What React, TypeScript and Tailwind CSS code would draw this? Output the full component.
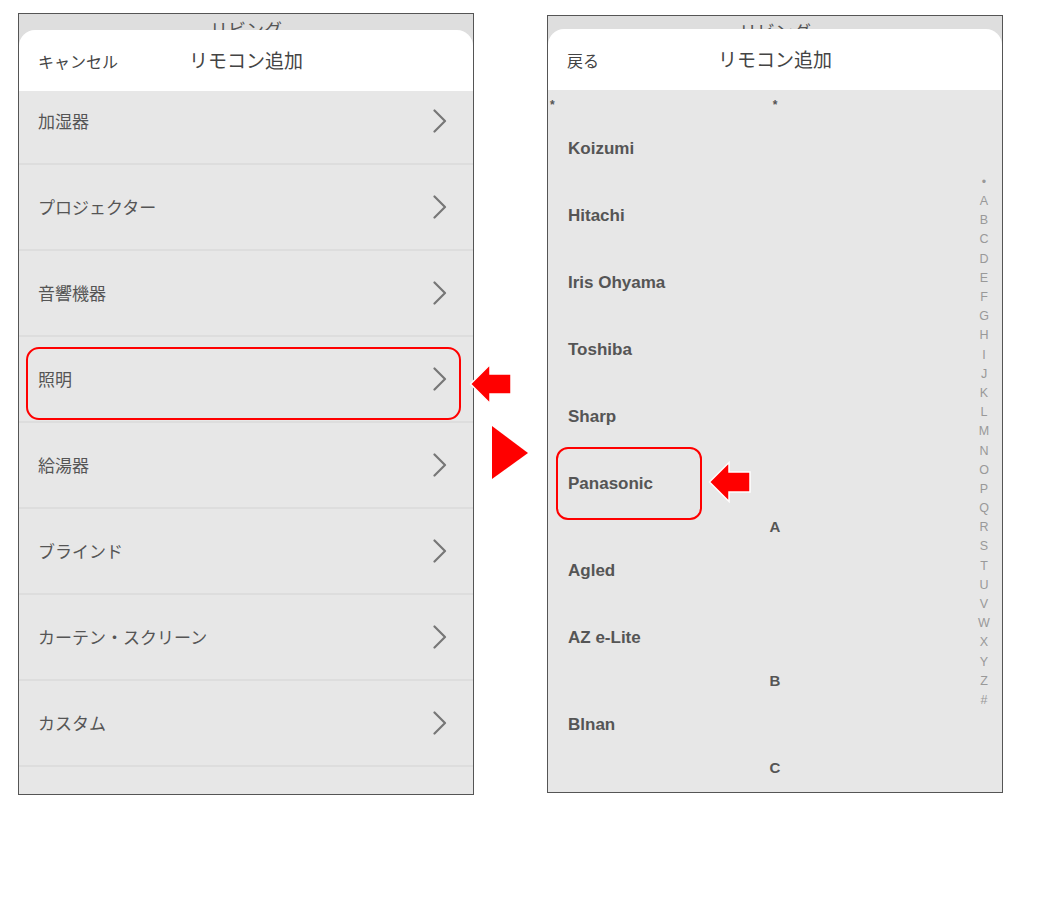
import React from 'react';

const categories = [
  '加湿器',
  'プロジェクター',
  '音響機器',
  '照明',
  '給湯器',
  'ブラインド',
  'カーテン・スクリーン',
  'カスタム',
];

type Entry = { kind: 'brand' | 'section'; label: string };

const brands: Entry[] = [
  { kind: 'brand', label: 'Koizumi' },
  { kind: 'brand', label: 'Hitachi' },
  { kind: 'brand', label: 'Iris Ohyama' },
  { kind: 'brand', label: 'Toshiba' },
  { kind: 'brand', label: 'Sharp' },
  { kind: 'brand', label: 'Panasonic' },
  { kind: 'section', label: 'A' },
  { kind: 'brand', label: 'Agled' },
  { kind: 'brand', label: 'AZ e-Lite' },
  { kind: 'section', label: 'B' },
  { kind: 'brand', label: 'Blnan' },
  { kind: 'section', label: 'C' },
];

const indexLetters = ['•', ...'ABCDEFGHIJKLMNOPQRSTUVWXYZ'.split(''), '#'];

function Chevron() {
  return (
    <svg width="14" height="24" viewBox="0 0 14 24" fill="none">
      <path d="M1.5 1.5 L12 12 L1.5 22.5" stroke="#777" strokeWidth="2.2" strokeLinecap="round" strokeLinejoin="round" />
    </svg>
  );
}

function RedArrow({ className }: { className?: string }) {
  return (
    <svg className={className} width="44" height="42" viewBox="0 0 44 42">
      <polygon
        points="1.5,21 21,1.5 21,11 42,11 42,31 21,31 21,40.5"
        fill="#ff0000"
        stroke="#ffffff"
        strokeWidth="1.5"
      />
    </svg>
  );
}

function SheetHeader({ left }: { left: string }) {
  return (
    <div className="grid h-[61px] grid-cols-[1fr_auto_1fr] items-center rounded-t-[16px] bg-white">
      <span className="pl-[19px] text-[16px] text-[#444]">{left}</span>
      <span className="text-[19px] text-[#444]">リモコン追加</span>
      <span />
    </div>
  );
}

function TopStrip({ h }: { h: string }) {
  return (
    <div className={`${h} overflow-hidden text-center`}>
      <div className="pt-[6px] text-[18px] leading-none text-[#555]">リビング</div>
    </div>
  );
}

export default function App() {
  return (
    <div className="min-h-[906px] w-[1058px] bg-white font-['Noto_Sans_CJK_JP',sans-serif]">
      <div className="flex items-start pl-[18px] pt-[13px]">
        {/* Category list */}
        <div className="h-[782px] w-[456px] overflow-hidden border border-[#555] bg-[#dedede]">
          <TopStrip h="h-[16px]" />
          <SheetHeader left="キャンセル" />
          <div className="bg-[#e7e7e7]">
            {categories.map((c, i) => (
              <div
                key={c}
                className={`relative flex items-center justify-between border-b-2 border-[#dddddd] pl-[19px] pr-[26px] ${
                  i === 0 ? 'h-[74px] pb-3' : 'h-[86px]'
                }`}
              >
                <span className="text-[17px] text-[#555]">{c}</span>
                <Chevron />
                {c === '照明' && (
                  <div className="absolute left-[7px] top-[10px] h-[73px] w-[435px] rounded-[13px] border-2 border-[#ff0000]" />
                )}
              </div>
            ))}
            <div className="h-[86px]" />
          </div>
        </div>

        {/* Arrows between the screens */}
        <div className="relative h-[782px] w-[73px]">
          <RedArrow className="absolute left-[-5px] top-[350px]" />
          <svg className="absolute left-[18px] top-[413px]" width="36" height="53" viewBox="0 0 36 53">
            <polygon points="0,0 36,27 0,53" fill="#ff0000" />
          </svg>
        </div>

        {/* Maker list */}
        <div className="mt-[2px] h-[778px] w-[456px] overflow-hidden border border-[#555] bg-[#dedede]">
          <TopStrip h="h-[13px]" />
          <SheetHeader left="戻る" />
          <div className="relative h-[703px] bg-[#e7e7e7] pt-[5px] font-['Liberation_Sans',sans-serif] text-[#555]">
            <div className="relative h-[20px] pt-[4px] text-center text-[12px] font-bold leading-none">
              <span className="absolute left-[2px] top-[4px]">*</span>
              <span>*</span>
            </div>
            {brands.map((b) =>
              b.kind === 'section' ? (
                <div key={b.label} className="flex h-[20px] items-center justify-center text-[15px] font-bold">
                  {b.label}
                </div>
              ) : (
                <div key={b.label} className="relative flex h-[67px] items-center pl-[20px] text-[17px] font-bold">
                  {b.label}
                  {b.label === 'Panasonic' && (
                    <>
                      <div className="absolute left-[8px] top-[-3px] h-[73px] w-[146px] rounded-[12px] border-2 border-[#ff0000]" />
                      <RedArrow className="absolute left-[160px] top-[11px]" />
                    </>
                  )}
                </div>
              )
            )}
            <div className="absolute bottom-0 right-[11px] top-0 flex w-[14px] flex-col items-center justify-center">
              {indexLetters.map((l) => (
                <span key={l} className="h-[19.2px] text-[12.5px] leading-[19.2px] text-[#999]">
                  {l}
                </span>
              ))}
            </div>
          </div>
        </div>
      </div>
    </div>
  );
}
